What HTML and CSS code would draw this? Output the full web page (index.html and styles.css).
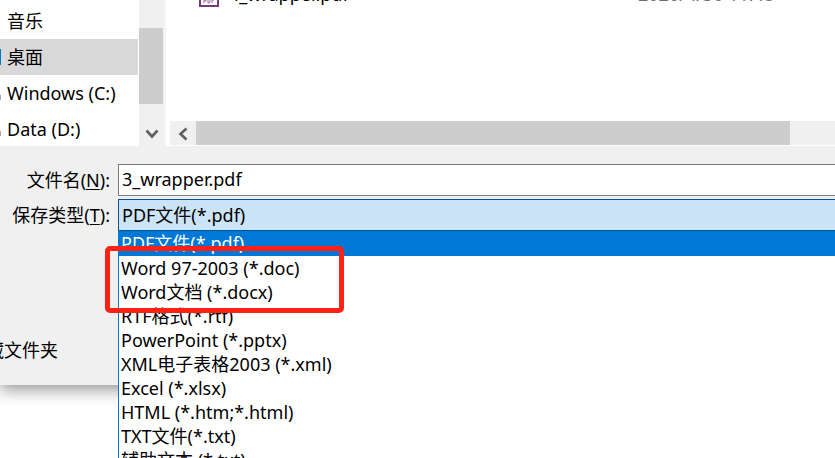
FILE: index.html
```html
<!DOCTYPE html>
<html lang="zh-CN">
<head>
    <meta charset="UTF-8">
    <meta name="viewport" content="width=device-width, initial-scale=1.0">
    <title>另存为</title>
    <link rel="stylesheet" href="styles.css">
</head>
<body>
    <div class="dialog">
        <div class="explorer">
            <nav class="sidebar">
                <a class="place" href="#music">音乐</a>
                <a class="place active" href="#desktop">桌面</a>
                <a class="place drive" href="#c">Windows (C:)</a>
                <a class="place drive" href="#d">Data (D:)</a>
            </nav>
            <div class="scroll-y">
                <div class="thumb-y"></div>
                <button class="arrow" aria-label="向下滚动">
                    <svg width="14" height="10" viewBox="0 0 14 10"><path d="M1.5 1.5L7 7.5L12.5 1.5" fill="none" stroke="#606060" stroke-width="2.6"/></svg>
                </button>
            </div>
            <div class="files">
                <div class="file">
                    <svg class="pdf" width="20" height="26" viewBox="0 0 20 26"><path d="M1 1H19V25H1Z" fill="#fff" stroke="#78397a" stroke-width="2"/><path d="M5 22V17H7V20H5M9 17V22H10L11 21V18L10 17ZM13 22V17H15M13 19H15" fill="none" stroke="#9b6a9d"/></svg>
                    <span class="name">4_wrapper.pdf</span>
                    <span class="date">2020/4/30 11:48</span>
                </div>
                <div class="scroll-x">
                    <button class="arrow" aria-label="向左滚动">
                        <svg width="10" height="14" viewBox="0 0 10 14"><path d="M8.5 1.5L2.5 7L8.5 12.5" fill="none" stroke="#606060" stroke-width="2.6"/></svg>
                    </button>
                    <div class="thumb-x"></div>
                </div>
            </div>
        </div>

        <form class="save">
            <label for="filename">文件名(<u>N</u>):</label>
            <input type="text" id="filename" value="3_wrapper.pdf">
            <label for="type">保存类型(<u>T</u>):</label>
            <div class="type">
                <select id="type">
                    <option>PDF文件(*.pdf)</option>
                </select>
                <ul class="menu" role="listbox">
                    <li class="selected" role="option" aria-selected="true">PDF文件(*.pdf)</li>
                    <li role="option">Word 97-2003 (*.doc)</li>
                    <li role="option">Word文档 (*.docx)</li>
                    <li role="option">RTF格式(*.rtf)</li>
                    <li role="option">PowerPoint (*.pptx)</li>
                    <li role="option">XML电子表格2003 (*.xml)</li>
                    <li role="option">Excel (*.xlsx)</li>
                    <li role="option">HTML (*.htm;*.html)</li>
                    <li role="option">TXT文件(*.txt)</li>
                    <li role="option">辅助文本 (*.txt)</li>
                </ul>
                <div class="mark"></div>
            </div>
        </form>
        <button class="hide">隐藏文件夹</button>
    </div>
</body>
</html>
```

FILE: styles.css
```css
* {
    box-sizing: border-box;
    margin: 0;
    padding: 0;
}
body {
    height: 100vh;
    overflow: hidden;
    background-color: #fff;
    color: #000;
    font-family: "Noto Sans", "Noto Sans CJK SC", sans-serif;
    font-size: 18px;
    line-height: 24px;
    font-weight: 400;
}
button, input, select {
    font: inherit;
    color: inherit;
    border: none;
    background: none;
}
.dialog {
    background-color: #f0f0f0;
    box-shadow: 0 4px 16px rgba(0, 0, 0, 0.45);
}
.explorer {
    display: flex;
    height: 146px;
    background-color: #fff;
}
.sidebar {
    width: 138px;
    margin-right: 1px;
    padding-top: 3px;
}
.place {
    display: block;
    height: 36px;
    padding-left: 7px;
    line-height: 36px;
    color: #000;
    text-decoration: none;
}
.active {
    background: linear-gradient(#0078c8, #0078c8) 0 10px / 1px 16px no-repeat #d9d9d9;
}
.drive {
    background: linear-gradient(#aaa, #aaa) 0 20px / 1px 5px no-repeat;
}
.scroll-y {
    display: flex;
    flex-direction: column;
    justify-content: space-between;
    width: 25px;
    padding-top: 28px;
    background-color: #f0f0f0;
}
.thumb-y {
    width: 24px;
    height: 76px;
    background-color: #cdcdcd;
}
.arrow {
    display: flex;
    align-items: center;
    justify-content: center;
    width: 25px;
    height: 25px;
}
.files {
    display: flex;
    flex: 1;
    flex-direction: column;
    justify-content: space-between;
    border-left: 2px solid #f5f5f5;
    padding: 0 0 1px 4px;
}
.file {
    display: flex;
    align-items: center;
    height: 26px;
    margin-top: -19px;
    padding-left: 29px;
}
.name {
    width: 419px;
    padding-left: 10px;
}
.date {
    color: #6d6d6d;
}
.scroll-x {
    display: flex;
    height: 24px;
    background-color: #f0f0f0;
}
.thumb-x {
    width: 594px;
    height: 24px;
    margin-left: 1px;
    background-color: #cdcdcd;
}
.save {
    display: grid;
    grid-template-columns: 110px 1fr;
    column-gap: 8px;
    row-gap: 3px;
    padding-top: 18px;
}
.save label {
    line-height: 32px;
    text-align: right;
}
u {
    text-underline-offset: 2px;
}
#filename {
    width: 100%;
    height: 32px;
    padding: 0 0 2px 3px;
    border: 1px solid #7a7a7a;
    border-right: none;
    background-color: #fff;
}
.type {
    position: relative;
}
#type {
    display: block;
    appearance: none;
    width: 100%;
    height: 32px;
    padding-left: 3px;
    border: 1px solid #00559b;
    border-right: none;
    background-color: #cce4f7;
}
.menu {
    position: absolute;
    top: 32px;
    left: 0;
    width: 100%;
    padding-bottom: 8px;
    border-left: 1px solid #0078d7;
    background-color: #fff;
    list-style: none;
}
.menu li {
    height: 24px;
    padding-left: 2px;
}
.menu .selected {
    height: 25px;
    background-color: #0078d7;
    color: #fff;
}
.mark {
    position: absolute;
    top: 47px;
    left: -13px;
    width: 239px;
    height: 67px;
    border: 5px solid #ff2113;
    border-radius: 5px;
}
.hide {
    display: block;
    margin: 107px 0 0 -32px;
    padding-bottom: 23px;
}
```
